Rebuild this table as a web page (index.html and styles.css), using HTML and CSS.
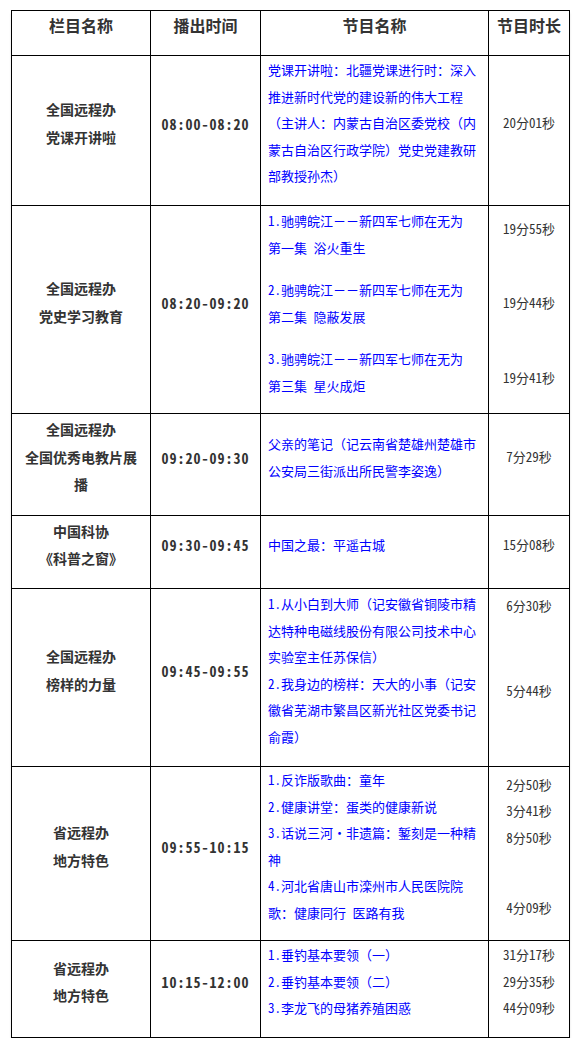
FILE: index.html
```html
<!DOCTYPE html>
<html lang="zh-CN">
<head>
<meta charset="utf-8">
<title>节目单</title>
<link rel="stylesheet" href="styles.css">
</head>
<body>
<div class="page">
<table class="sched">
  <colgroup>
    <col class="c-col">
    <col class="c-time">
    <col class="c-prog">
    <col class="c-dur">
  </colgroup>
  <tr class="head">
    <th>栏目名称</th>
    <th>播出时间</th>
    <th>节目名称</th>
    <th>节目时长</th>
  </tr>
  <tr class="r1">
    <td class="col">全国远程办<br>党课开讲啦</td>
    <td class="time">08:00-08:20</td>
    <td class="prog">党课开讲啦：北疆党课进行时：深入<br>推进新时代党的建设新的伟大工程<br>（主讲人：内蒙古自治区委党校（内<br>蒙古自治区行政学院）党史党建教研<br>部教授孙杰）</td>
    <td class="dur">20分01秒</td>
  </tr>
  <tr class="r2">
    <td class="col">全国远程办<br>党史学习教育</td>
    <td class="time">08:20-09:20</td>
    <td class="prog prog-r2">
      <div class="item">1.驰骋皖江－－新四军七师在无为<br>第一集 浴火重生</div>
      <div class="item">2.驰骋皖江－－新四军七师在无为<br>第二集 隐蔽发展</div>
      <div class="item">3.驰骋皖江－－新四军七师在无为<br>第三集 星火成炬</div>
    </td>
    <td class="dur dur-r2">
      <div class="d">19分55秒</div>
      <div class="d">19分44秒</div>
      <div class="d">19分41秒</div>
    </td>
  </tr>
  <tr class="r3">
    <td class="col">全国远程办<br>全国优秀电教片展<br>播</td>
    <td class="time">09:20-09:30</td>
    <td class="prog">父亲的笔记（记云南省楚雄州楚雄市<br>公安局三街派出所民警李姿逸）</td>
    <td class="dur">7分29秒</td>
  </tr>
  <tr class="r4">
    <td class="col">中国科协<br>《科普之窗》</td>
    <td class="time">09:30-09:45</td>
    <td class="prog">中国之最：平遥古城</td>
    <td class="dur">15分08秒</td>
  </tr>
  <tr class="r5">
    <td class="col">全国远程办<br>榜样的力量</td>
    <td class="time">09:45-09:55</td>
    <td class="prog">1.从小白到大师（记安徽省铜陵市精<br>达特种电磁线股份有限公司技术中心<br>实验室主任苏保信）<br>2.我身边的榜样：天大的小事（记安<br>徽省芜湖市繁昌区新光社区党委书记<br>俞霞）</td>
    <td class="dur dur-r5">
      <div class="d">6分30秒</div>
      <div class="d">5分44秒</div>
    </td>
  </tr>
  <tr class="r6">
    <td class="col">省远程办<br>地方特色</td>
    <td class="time">09:55-10:15</td>
    <td class="prog">1.反诈版歌曲：童年<br>2.健康讲堂：蛋类的健康新说<br>3.话说三河·非遗篇：錾刻是一种精<br>神<br>4.河北省唐山市滦州市人民医院院<br>歌：健康同行 医路有我</td>
    <td class="dur dur-r6">
      <div class="d">2分50秒</div>
      <div class="d">3分41秒</div>
      <div class="d">8分50秒</div>
      <div class="d">4分09秒</div>
    </td>
  </tr>
  <tr class="r7">
    <td class="col">省远程办<br>地方特色</td>
    <td class="time">10:15-12:00</td>
    <td class="prog">1.垂钓基本要领（一）<br>2.垂钓基本要领（二）<br>3.李龙飞的母猪养殖困惑</td>
    <td class="dur">31分17秒<br>29分35秒<br>44分09秒</td>
  </tr>
</table>
</div>
</body>
</html>
```

FILE: styles.css
```css
html, body {
  margin: 0;
  padding: 0;
  background: #ffffff;
}

body {
  font-family: "Noto Sans Mono CJK SC", "Noto Sans CJK SC", sans-serif;
  color: #333333;
}

.page {
  padding: 10px 0 0 11px;
}

.sched {
  border-collapse: collapse;
  table-layout: fixed;
  width: 559px;
  border: 1px solid #000000;
  box-shadow: 0 3px 2px rgba(0, 0, 0, 0.12);
}

.c-col { width: 139px; }
.c-time { width: 110px; }
.c-prog { width: 228px; }
.c-dur { width: 81px; }

.sched th,
.sched td {
  border: 1px solid #000000;
  padding: 0 6px 14px;
  vertical-align: middle;
  white-space: nowrap;
}

.sched th {
  font-size: 16px;
  font-weight: bold;
  line-height: 20px;
  padding-bottom: 17px;
  text-align: center;
  color: #333333;
}

.head { height: 45px; }
.r1 { height: 150px; }
.r2 { height: 208px; }
.r3 { height: 102px; }
.r4 { height: 73px; }
.r5 { height: 178px; }
.r6 { height: 174px; }
.r7 { height: 97px; }

.col {
  font-size: 14px;
  font-weight: bold;
  line-height: 27.5px;
  text-align: center;
  color: #333333;
}

.time {
  font-size: 14px;
  font-weight: bold;
  letter-spacing: 1px;
  text-align: center;
  color: #333333;
}

.sched td.prog {
  font-size: 13px;
  line-height: 26.5px;
  color: #0000ff;
  text-align: left;
  padding-left: 7px;
}

.prog-r2 .item {
  line-height: 27px;
}

.prog-r2 .item + .item {
  margin-top: 15px;
}

.dur {
  font-size: 13px;
  line-height: 26.5px;
  text-align: center;
  color: #333333;
}

.dur-r2 .d {
  line-height: 27px;
}

.dur-r2 .d + .d {
  margin-top: 47.5px;
}

.sched td.dur-r5 {
  padding-bottom: 58px;
}

.dur-r5 .d + .d {
  margin-top: 58.8px;
}

.dur-r6 .d {
  line-height: 26.2px;
}

.dur-r6 .d:nth-child(4) {
  margin-top: 43.8px;
}
```
